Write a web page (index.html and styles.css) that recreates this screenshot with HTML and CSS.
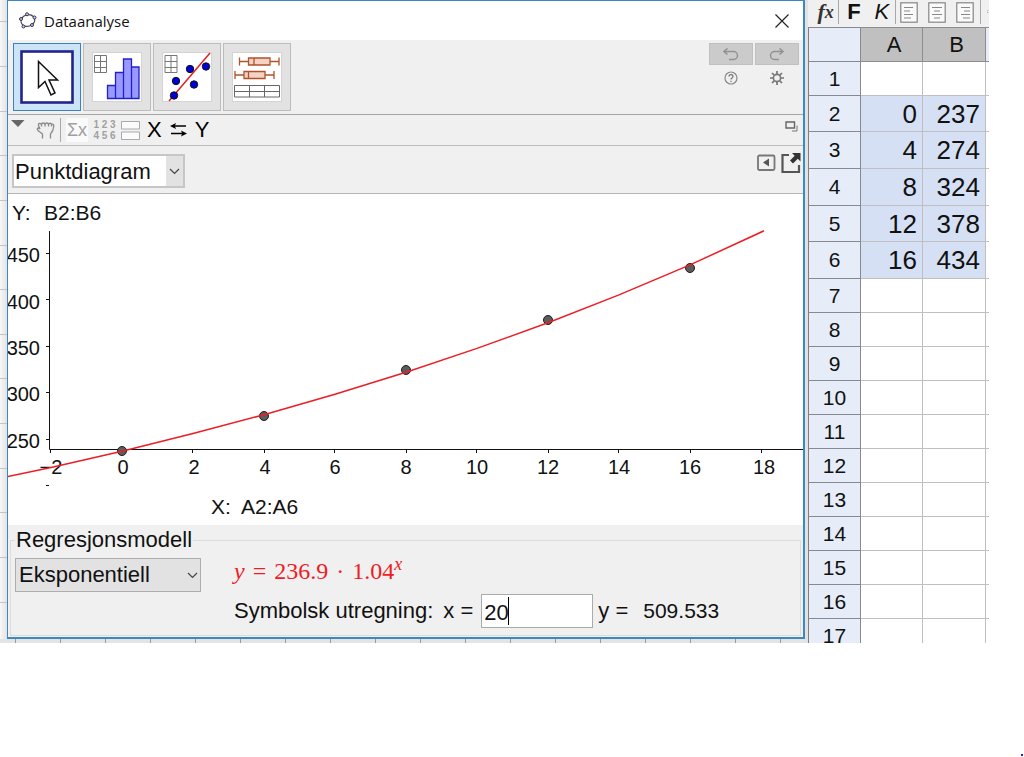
FILE: index.html
```html
<!DOCTYPE html>
<html lang="nb">
<head>
<meta charset="utf-8">
<meta name="viewport" content="width=device-width, initial-scale=1">
<title>Dataanalyse</title>
<link rel="stylesheet" href="styles.css">
</head>
<body>
<div class="desktop">
  <main class="graphics">
    <section class="dialog" aria-labelledby="dialog-title">
      <header class="titlebar">
        <svg class="logo" width="20" height="18" viewBox="0 0 20 18" aria-hidden="true">
          <ellipse cx="10" cy="8.500" rx="7" ry="5.800" transform="rotate(-18 10 9)" fill="none" stroke="#445" stroke-width="1.2"/>
          <g fill="#c9c9f5" stroke="#334" stroke-width="1"><circle cx="9" cy="2.3" r="1.5"/><circle cx="16.500" cy="5.500" r="1.5"/><circle cx="14" cy="13" r="1.5"/><circle cx="5.500" cy="14.500" r="1.5"/><circle cx="3" cy="7" r="1.5"/></g>
        </svg>
        <h1 id="dialog-title">Dataanalyse</h1>
        <button class="close" aria-label="Lukk">
          <svg width="14" height="14" viewBox="0 0 14 14"><path d="M.5.5l13 13M13.5.5l-13 13" stroke="#222" stroke-width="1.2"/></svg>
        </button>
      </header>

      <div class="toolbar">
        <div class="tools">
          <button class="tool selected" aria-label="Flytt">
            <svg width="54" height="54" viewBox="0 0 54 54"><rect x="1.5" y="1.5" width="51" height="51" fill="#fff" stroke="#23238e" stroke-width="2.6"/><path d="M18.5 11.500v26l6.500-6 6 13.500 4-2-6-13h8.500z" fill="#fff" stroke="#111" stroke-width="1.5"/></svg>
          </button>
          <button class="tool" aria-label="Analyse av en variabel">
            <svg width="50" height="50" viewBox="0 0 50 50"><rect x=".5" y=".5" width="49" height="49" fill="#fff" stroke="#d4d4d4"/><g fill="none" stroke="#777"><path d="M2.500 3.500h12v17h-12zM8.500 3.500v17M2.500 9.500h12M2.500 15.500h12"/></g><g fill="#9999ff" stroke="#2020cc" stroke-width="1.3"><path d="M15.500 33.500h8v13h-8zM23.500 20.500h8v26h-8zM31.500 7h8v39.500h-8zM39.500 15h7.500v31.500h-7.500z"/></g></svg>
          </button>
          <button class="tool" aria-label="Regresjonsanalyse">
            <svg width="50" height="50" viewBox="0 0 50 50"><rect x=".5" y=".5" width="49" height="49" fill="#fff" stroke="#d4d4d4"/><path d="M3 3.500h12v17H3zM9 3.500v17M3 9.500h12M3 15.500h12" fill="none" stroke="#777"/><path d="M7 49L48 1" stroke="#e02020" stroke-width="1.5"/><g fill="#0000d8" stroke="#111"><circle cx="12" cy="43.500" r="3.700"/><circle cx="14" cy="29" r="3.700"/><circle cx="28" cy="17" r="3.700"/><circle cx="32" cy="32.500" r="3.700"/><circle cx="44" cy="14.500" r="3.700"/></g></svg>
          </button>
          <button class="tool" aria-label="Analyse av flere variabler">
            <svg width="50" height="50" viewBox="0 0 50 50"><rect x=".5" y=".5" width="49" height="49" fill="#fff" stroke="#d4d4d4"/><g fill="#f4d3c4" stroke="#b0522c" stroke-width="1.300"><path d="M7.500 9.500H17M38 9.500h9M7.500 5.500v8M47 5.500v8M16.500 6H38v7H16.500zM22 6v7M3 23h9M33 23h9M3 19v8M42 19v8M12 19.500h21v7H12zM16.500 19.500v7"/></g><path d="M2.500 33.500h45v11.500h-45zM2.500 39.500h45M17.500 33.500v11.500M32.500 33.500v11.500" fill="none" stroke="#666"/></svg>
          </button>
        </div>
        <div class="actions">
          <button class="history" aria-label="Angre"><svg width="16" height="13" viewBox="0 0 16 13"><path d="M1 3.500h9.500a4 4 0 010 8H6M4.500.5L1 3.500l3.500 3" fill="none" stroke="#929292" stroke-width="1.500"/></svg></button>
          <button class="history" aria-label="Gjør om"><svg width="16" height="13" viewBox="0 0 16 13"><path d="M14 3.500H5.500a4 4 0 000 8H10M10.500.5L14 3.500l-3.500 3" fill="none" stroke="#929292" stroke-width="1.500"/></svg></button>
          <button class="plain" aria-label="Hjelp"><svg width="14" height="14" viewBox="0 0 14 14"><circle cx="7" cy="7" r="6" fill="none" stroke="#888" stroke-width="1.200"/><path d="M5 5.500c0-2.600 4-2.600 4-.2C9 7 7 6.800 7 8.500M7 9.800v1.300" fill="none" stroke="#777" stroke-width="1.300"/></svg></button>
          <button class="plain" aria-label="Innstillinger"><svg width="14" height="14" viewBox="0 0 14 14"><circle cx="7" cy="7" r="3.600" fill="none" stroke="#777" stroke-width="1.600"/><path d="M7 0v3M7 11v3M0 7h3M11 7h3M2 2l2.200 2.200M9.800 9.800L12 12M12 2L9.800 4.200M4.200 9.800L2 12" stroke="#777" stroke-width="1.700"/></svg></button>
        </div>
      </div>

      <div class="stylebar">
        <button class="plain fold" aria-label="Vis stilverktøy"><svg width="14" height="8" viewBox="0 0 14 8"><path d="M0 0h13.500L7 7z" fill="#666"/></svg></button>
        <button class="plain hand" aria-label="Flytt grafikkfelt"><svg width="19" height="19" viewBox="0 0 19 19"><path d="M6.500 17.500v-4.500L2 9.500C.5 7.500 2 6 4 8L2.500 4.500C2 2 4.500 2 5.500 3.500 6 1.500 8.500 1.500 9 3.500c.6-2 3-2 3.500 0 .6-1.800 2.600-1.500 3 0 1.200-.8 2.500-.2 2.300 1.500-.2 3-1 5.500-3.300 8v4.500M5.500 3.500v2M9 3.500v2M12.500 3.500v2M15.500 3.500v2" fill="none" stroke="#8a8a8a" stroke-width="1.300"/></svg></button>
        <span class="rule"></span>
        <button class="plain sigma">Σx</button>
        <button class="plain digits"><span>1 2 3</span><span>4 5 6</span></button>
        <button class="plain" aria-label="Vis to grafer"><svg width="19" height="19" viewBox="0 0 19 19"><path d="M.5.5h18v7.500H.5zM.5 11h18v7.500H.5z" fill="#fbfbfb" stroke="#aaa"/></svg></button>
        <button class="plain swap" aria-label="Bytt X og Y"><span>X</span><svg width="17" height="14" viewBox="0 0 17 14"><path d="M3 3h13M1 10.500h13" stroke="#000" stroke-width="1.700"/><path d="M0 3L6 0 4.800 3 6 6zM17 10.500l-6-3 1.200 3-1.200 3z"/></svg><span>Y</span></button>
        <button class="plain undock" aria-label="Løsne vindu"><svg width="13" height="11" viewBox="0 0 13 11"><path d="M1 1h8.500v6H1z" fill="none" stroke="#666" stroke-width="1.400"/><path d="M12 4.500v5.500H7" fill="none" stroke="#777"/></svg></button>
      </div>

      <div class="plotbar">
        <span class="picker">
          <select class="plot-type" aria-label="Diagramtype"><option>Punktdiagram</option><option>Residualplott</option></select>
          <svg class="chevron boxed" width="17" height="30" viewBox="0 0 17 30" aria-hidden="true"><path d="M0 0h17v30H0z" fill="#e2e2e2"/><path d="M4 13l4.500 4.500L13 13" fill="none" stroke="#444" stroke-width="1.200"/></svg>
        </span>
        <span class="plot-actions">
          <button class="plain" aria-label="Vis data"><svg width="19" height="18" viewBox="0 0 19 18"><rect x="1" y="1.500" width="16.500" height="14.500" rx="1.500" fill="none" stroke="#777" stroke-width="1.800"/><path d="M12 4.500v8L6 8.500z" fill="#555"/></svg></button>
          <button class="plain" aria-label="Eksporter"><svg width="20" height="21" viewBox="0 0 20 21"><path d="M8 2H1.500v17H18V12" fill="none" stroke="#555" stroke-width="2.200"/><path d="M11 0h8.500v8.500l-2.700-2.700L12 10.500 9 7.500l4.700-4.700z" fill="#333"/></svg></button>
        </span>
      </div>

      <svg class="plot" viewBox="0 0 795 331" role="img" aria-label="Punktdiagram med eksponentiell regresjon">
        <g class="plot-label"><text x="4" y="26">Y:</text><text x="36" y="26">B2:B6</text><text x="203" y="320">X:</text><text x="233" y="320">A2:A6</text></g>
        <path class="axis" d="M41.500 37v218.500H795M38 59.500h3M38 105.500h3M38 152.500h3M38 198.500h3M38 245.500h3M38 291.500h3M42.500 256v3M114.500 256v3M184.500 256v3M256.500 256v3M326.500 256v3M398.500 256v3M468.500 256v3M540.500 256v3M610.500 256v3M682.500 256v3M753.500 256v3"/>
        <g class="ticks-y"><text x="32" y="68">450</text><text x="32" y="115">400</text><text x="32" y="161">350</text><text x="32" y="207">300</text><text x="32" y="254">250</text></g>
        <g class="ticks-x"><text x="43" y="280">−2</text><text x="115" y="280">0</text><text x="186" y="280">2</text><text x="257" y="280">4</text><text x="327" y="280">6</text><text x="398" y="280">8</text><text x="469" y="280">10</text><text x="540" y="280">12</text><text x="611" y="280">14</text><text x="682" y="280">16</text><text x="756" y="280">18</text></g>
        <g class="points"><circle cx="114" cy="257" r="4.500"/><circle cx="256" cy="222" r="4.500"/><circle cx="398" cy="176" r="4.500"/><circle cx="540" cy="126" r="4.500"/><circle cx="682" cy="74" r="4.500"/></g>
        <polyline class="curve" points="0,282.6 43,273.4 114,257.2 185,239.6 256,220.7 327,200.3 398,178.2 469,154.4 540,128.7 611,100.9 682,70.9 756,36.8"/>
      </svg>

      <form class="model">
        <fieldset>
          <legend>Regresjonsmodell</legend>
          <div class="model-grid">
            <span class="picker">
              <select class="model-type" aria-label="Regresjonsmodell"><option>Eksponentiell</option><option>Lineær</option></select>
              <svg class="chevron" width="17" height="30" viewBox="0 0 17 30" aria-hidden="true"><path d="M4 13l4.500 4.500L13 13" fill="none" stroke="#444" stroke-width="1.200"/></svg>
            </span>
            <output class="formula"><i>y</i><span>=</span><span>236.9</span><span>·</span><span>1.04<sup>x</sup></span></output>
            <div class="evaluate">
              <span>Symbolsk utregning:</span>
              <label for="x-value">x =</label>
              <span class="field"><input id="x-value" type="text" value="20"><span class="caret"></span></span>
              <span>y =</span>
              <output class="result" for="x-value">509.533</output>
            </div>
          </div>
        </fieldset>
      </form>
    </section>
    <svg class="grid-left" width="7" height="639" aria-hidden="true"><path d="M0 21.500h7M0 66.500h7M0 111.500h7M0 155.500h7M0 200.500h7M0 245.500h7M0 289.500h7M0 334.500h7M0 378.500h7M0 423.500h7M0 468.500h7M0 512.500h7M0 557.500h7M0 602.500h7" stroke="#c4c4c4"/></svg>
    <div class="grid-bottom"></div>
  </main>

  <aside class="sheet">
    <div class="sheet-tools">
      <button class="plain fx" aria-label="Formellinje"><i>f</i><i class="fx-arg">x</i></button>
      <span class="rule"></span>
      <button class="plain bold">F</button>
      <button class="plain italic">K</button>
      <span class="rule"></span>
      <span class="aligns">
        <button class="plain" aria-label="Venstrejuster"><svg width="18" height="21" viewBox="0 0 18 21"><rect x=".8" y=".8" width="16.400" height="19.400" fill="#fafafa" stroke="#858585" stroke-width="1.200"/><path d="M4 5.500h9M4 9h6M4 12.500h9M4 16h7" stroke="#888"/></svg></button>
        <button class="plain" aria-label="Midtstill"><svg width="18" height="21" viewBox="0 0 18 21"><rect x=".8" y=".8" width="16.400" height="19.400" fill="#fafafa" stroke="#858585" stroke-width="1.200"/><path d="M4 5.500h10M6 9h6M4 12.500h10M6 16h6" stroke="#888"/></svg></button>
        <button class="plain" aria-label="Høyrejuster"><svg width="18" height="21" viewBox="0 0 18 21"><rect x=".8" y=".8" width="16.400" height="19.400" fill="#fafafa" stroke="#858585" stroke-width="1.200"/><path d="M5 5.500h9M8 9h6M5 12.500h9M7 16h7" stroke="#888"/></svg></button>
      </span>
      <span class="rule"></span>
      <button class="plain swatch" aria-label="Bakgrunnsfarge"><svg width="8" height="10" viewBox="0 0 8 10"><rect x=".5" y=".5" width="12" height="8" fill="#fff" stroke="#557"/></svg></button>
    </div>
    <table>
      <colgroup><col class="col-head"><col class="col-a"><col class="col-b"><col></colgroup>
      <thead><tr><td class="corner"></td><th scope="col">A</th><th scope="col">B</th><td class="next"></td></tr></thead>
      <tbody>
        <tr><th scope="row">1</th><td></td><td></td><td></td></tr>
        <tr class="data short"><th scope="row">2</th><td>0</td><td>237</td><td></td></tr>
        <tr class="data"><th scope="row">3</th><td>4</td><td>274</td><td></td></tr>
        <tr class="data"><th scope="row">4</th><td>8</td><td>324</td><td></td></tr>
        <tr class="data short"><th scope="row">5</th><td>12</td><td>378</td><td></td></tr>
        <tr class="data"><th scope="row">6</th><td>16</td><td>434</td><td></td></tr>
        <tr><th scope="row">7</th><td></td><td></td><td></td></tr>
        <tr><th scope="row">8</th><td></td><td></td><td></td></tr>
        <tr><th scope="row">9</th><td></td><td></td><td></td></tr>
        <tr><th scope="row">10</th><td></td><td></td><td></td></tr>
        <tr><th scope="row">11</th><td></td><td></td><td></td></tr>
        <tr><th scope="row">12</th><td></td><td></td><td></td></tr>
        <tr><th scope="row">13</th><td></td><td></td><td></td></tr>
        <tr><th scope="row">14</th><td></td><td></td><td></td></tr>
        <tr><th scope="row">15</th><td></td><td></td><td></td></tr>
        <tr><th scope="row">16</th><td></td><td></td><td></td></tr>
        <tr><th scope="row">17</th><td></td><td></td><td></td></tr>
      </tbody>
    </table>
  </aside>
</div>
<span class="dot"></span>
</body>
</html>
```

FILE: styles.css
```css
* { box-sizing: border-box; }

body {
  margin: 0;
  min-height: 100vh;
  position: relative;
  background: #fff;
  color: #111;
  font: 22px/26px "Liberation Sans", Arial, sans-serif;
}

svg { display: block; }

button, select, input { font: inherit; color: inherit; }

button {
  display: flex;
  align-items: center;
  justify-content: center;
  padding: 0;
  border: 0;
}

.plain { background: none; }

.rule { width: 1px; height: 24px; background: #a8a8a8; }

.desktop { display: flex; padding-right: 35px; }

/* Graphics view behind the dialog */
.graphics {
  position: relative;
  flex: 1;
  min-width: 0;
  padding: 0 3px 4px 7px;
  background: linear-gradient(to right, #f8f8f8, #e2e2e2 7px);
}

.grid-left { position: absolute; left: 0; top: 0; }

.grid-bottom {
  position: absolute;
  inset: auto 3px 0 0;
  height: 4px;
  background: repeating-linear-gradient(to right, #e4e4e4 0 15px, #9a9a9a 15px 16px, #e4e4e4 16px 45px);
}

/* Dialog */
.dialog {
  position: relative;
  background: #f0f0f0;
  border: solid #3b88c3;
  border-width: 1px 2px 2px 1px;
}

.titlebar {
  display: flex;
  align-items: center;
  gap: 6px;
  height: 39px;
  padding: 0 14px 0 10px;
  background: #fff;
}

.titlebar h1 {
  flex: 1;
  margin: 0;
  font: 15px/20px "Open Sans", "Noto Sans", sans-serif;
}

.close { background: none; }

.toolbar {
  display: flex;
  justify-content: space-between;
  height: 75px;
  padding: 3px 4px 0 5px;
  border-bottom: 1px solid #a6a6a6;
}

.tools { display: flex; gap: 2px; }

.tool {
  width: 68px;
  height: 68px;
  background: #e2e2e2;
  border: 1px solid #bcbcbc;
}

.tool.selected { background: #cce4f7; border-color: #3b82b8; }

.actions {
  display: grid;
  grid-template-columns: 44px 44px;
  grid-auto-rows: 22px;
  gap: 2px;
}

.history { background: #cbcbcb; border: 1px solid #c0c0c0; }

.stylebar {
  display: flex;
  align-items: center;
  gap: 4px;
  height: 31px;
  padding: 0 5px 0 3px;
  border-bottom: 1px solid #bdbdbd;
}

.fold { align-self: flex-start; padding-top: 5px; margin-right: 7px; }

.stylebar .rule { margin: 0 1px; }

.sigma {
  width: 22px;
  height: 24px;
  background: #fafafa;
  color: #a0a0a0;
  font-size: 18px;
}

.digits {
  flex-direction: column;
  width: 25px;
  color: #a0a0a0;
  font: bold 10px/11px "Liberation Sans", Arial, sans-serif;
}

.swap { gap: 8px; margin-left: 3px; color: #000; }

.undock { margin-left: auto; margin-bottom: 8px; }

.plotbar {
  display: flex;
  justify-content: space-between;
  align-items: flex-start;
  height: 48px;
  padding: 8px 2px 0 4px;
  border-bottom: 1px solid #b4b4b4;
}

.plot-actions { display: flex; align-items: center; gap: 5px; height: 18px; }

.picker { position: relative; display: block; }

.picker select {
  display: block;
  width: 100%;
  height: 34px;
  padding: 0 20px 0 3px;
  appearance: none;
  border: 1px solid #adadad;
  border-radius: 0;
  background: #e2e2e2;
}

.picker .plot-type {
  width: 173px;
  border: 2px solid #c6c6c6;
  background: #fff;
  padding: 1px 18px 0 1px;
}

.chevron { position: absolute; right: 0; top: 2px; pointer-events: none; }
.chevron.boxed { right: 2px; }

/* Plot */
.plot {
  width: 100%;
  height: auto;
  background: #fff;
  fill: #111;
}

.plot-label { font-size: 21px; }
.ticks-y { font-size: 20px; text-anchor: end; }
.ticks-x { font-size: 20px; text-anchor: middle; }
.axis { fill: none; stroke: #111; }
.points { fill: #5c5c5c; stroke: #1c1c1c; }
.curve { fill: none; stroke: #ee1c24; stroke-width: 1.5px; }

/* Regression model */
.model { padding: 2px 2px 1px; }

.model fieldset {
  min-width: 0;
  margin: 0;
  padding: 5px 4px 7px;
  border: 1px solid #dcdcdc;
}

.model legend { padding: 0 1px; }

.model-grid {
  display: grid;
  grid-template-columns: 186px 1fr;
  grid-auto-rows: 34px;
  gap: 2px 33px;
}

.formula {
  display: flex;
  align-items: baseline;
  gap: 8px;
  color: #ee1c24;
  font: 24px/26px "Liberation Serif", "Times New Roman", serif;
}

.formula sup {
  font-size: 18px;
  font-style: italic;
  line-height: 0;
}

.evaluate {
  grid-column: 2;
  display: flex;
  align-items: center;
}

.evaluate label { margin: 0 8px 0 10px; }

.field { position: relative; margin-right: 5px; }

.field input {
  display: block;
  width: 112px;
  height: 34px;
  padding: 4px 2px 0;
  border: 1px solid #ababab;
  background: #fff;
}

.caret {
  position: absolute;
  left: 27px;
  top: 3px;
  width: 1px;
  height: 28px;
  background: #000;
}

.result { margin-left: 15px; font-size: 21px; }

/* Spreadsheet */
.sheet {
  width: 181px;
  contain: size;
  overflow: hidden;
  background: #fff;
  font-size: 21px;
}

.sheet-tools {
  display: flex;
  align-items: center;
  height: 27px;
  padding: 0 0 3px 5px;
  background: #f0f0f0;
}

.fx {
  width: 26px;
  height: 24px;
  color: #333;
  font: bold 22px/24px "Liberation Serif", serif;
}

.fx-arg { font-size: 18px; }

.bold { width: 30px; font-weight: bold; }
.italic { width: 27px; font-style: italic; }
.bold, .italic { font-size: 22px; }
.aligns { display: flex; gap: 10px; margin: 0 6px 0 4px; }
.swatch { margin-left: 6px; flex: none; width: 2px; overflow: hidden; justify-content: flex-start; }

table {
  width: 100%;
  table-layout: fixed;
  border-collapse: separate;
  border-spacing: 0;
}

.col-head { width: 53px; }
.col-a { width: 62px; }
.col-b { width: 63px; }

th, td {
  height: 34px;
  padding: 0;
  line-height: 26px;
  font-weight: normal;
  border: solid #bfbfbf;
  border-width: 0 1px 1px 0;
}

td:last-child { border-right: 0; }

thead th, thead td { height: 35px; border-top: 1px solid #9a9a9a; border-color: #8d8d8d; }
thead th { background: #c0c0c0; padding-left: 5px; font-size: 22px; }
.corner, .next, tbody th { background: #e6edf8; }
.corner, tbody th { border-color: #858a92; border-left: 1px solid #8a7a78; }

.data td { height: 37px; font-size: 26px; text-align: right; padding-right: 5px; }
.short td { height: 36px; }
.data td:nth-child(2), .data td:nth-child(3) { background: #d6e0f5; }

.dot {
  position: absolute;
  right: 1px;
  bottom: 1px;
  width: 2px;
  height: 2px;
  background: #2020d0;
}
```
